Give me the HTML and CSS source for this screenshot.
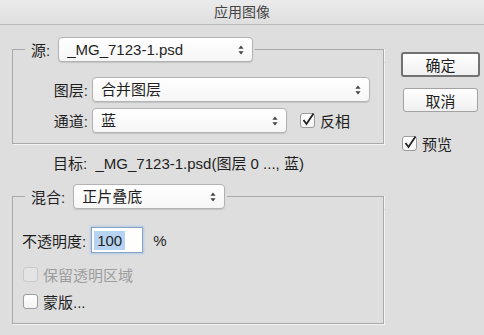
FILE: index.html
```html
<!DOCTYPE html>
<html lang="zh-CN">
<head>
    <meta charset="UTF-8">
    <title>应用图像</title>
    <link rel="stylesheet" href="styles.css">
</head>
<body>
    <div class="titlebar">应用图像</div>

    <div class="dialog">
        <div class="main">
            <!-- Source group -->
            <div class="group source">
                <div class="group-head">
                    <span class="label">源:</span>
                    <div class="select src-select">_MG_7123-1.psd<span class="arrows"><svg width="6" height="10" viewBox="0 0 6 10"><path d="M3 0.5 L5.6 3.8 H0.4 Z M3 9.5 L5.6 6.2 H0.4 Z" fill="#444"/></svg></span></div>
                </div>
                <div class="group-body">
                    <div class="row">
                        <span class="label fixed">图层:</span>
                        <div class="select layer-select">合并图层<span class="arrows"><svg width="6" height="10" viewBox="0 0 6 10"><path d="M3 0.5 L5.6 3.8 H0.4 Z M3 9.5 L5.6 6.2 H0.4 Z" fill="#444"/></svg></span></div>
                    </div>
                    <div class="row second">
                        <span class="label fixed">通道:</span>
                        <div class="select channel-select">蓝<span class="arrows"><svg width="6" height="10" viewBox="0 0 6 10"><path d="M3 0.5 L5.6 3.8 H0.4 Z M3 9.5 L5.6 6.2 H0.4 Z" fill="#444"/></svg></span></div>
                        <label class="check invert">
                            <span class="box"><svg width="16" height="16" viewBox="0 0 16 16"><polyline points="3.5,8 6.5,12 13.5,1.5" fill="none" stroke="#222" stroke-width="1.8"/></svg></span>
                            反相
                        </label>
                    </div>
                </div>
            </div>

            <p class="target">目标:&nbsp;&nbsp;_MG_7123-1.psd(图层 0 ..., 蓝)</p>

            <!-- Blending group -->
            <div class="group blend">
                <div class="group-head">
                    <span class="label">混合:</span>
                    <div class="select blend-select">正片叠底<span class="arrows"><svg width="6" height="10" viewBox="0 0 6 10"><path d="M3 0.5 L5.6 3.8 H0.4 Z M3 9.5 L5.6 6.2 H0.4 Z" fill="#444"/></svg></span></div>
                </div>
                <div class="group-body">
                    <div class="row opacity">
                        <span class="label">不透明度:</span>
                        <div class="input"><span class="selected">100</span></div>
                        <span class="unit">%</span>
                    </div>
                    <label class="check row-check disabled">
                        <span class="box"></span>
                        保留透明区域
                    </label>
                    <label class="check row-check last">
                        <span class="box"></span>
                        蒙版...
                    </label>
                </div>
            </div>
        </div>

        <!-- Buttons -->
        <div class="side">
            <button class="btn default">确定</button>
            <button class="btn">取消</button>
            <label class="check preview">
                <span class="box"><svg width="16" height="16" viewBox="0 0 16 16"><polyline points="3.5,8 6.5,12 13.5,1.5" fill="none" stroke="#222" stroke-width="1.8"/></svg></span>
                预览
            </label>
        </div>
    </div>
</body>
</html>
```

FILE: styles.css
```css
/* General */
body {
    margin: 0;
    width: 484px;
    height: 335px;
    overflow: hidden;
    background-color: #dedede;
    color: #1f1f1f;
    font-family: "Liberation Sans", "Noto Sans CJK SC", sans-serif;
    font-size: 15px;
}

.titlebar {
    height: 24px;
    line-height: 24px;
    text-align: center;
    font-size: 14px;
    color: #444;
    background: linear-gradient(#ebebeb, #dfdfdf);
    border-bottom: 1px solid #b9b9b9;
}

/* Layout */
.dialog {
    display: flex;
    padding: 12px 0 0 12px;
}

.main {
    width: 372px;
}

.side {
    width: 80px;
    margin-left: 16px;
    padding-top: 15px;
    display: flex;
    flex-direction: column;
    align-items: flex-start;
}

/* Groups: head line runs through the popup menu */
.group-head {
    display: flex;
    align-items: center;
    height: 25px;
}

.group-head::before,
.group-head::after {
    content: "";
    align-self: flex-end;
    height: 12px;
    border-top: 1px solid #a9a9a9;
}

.group-head::before {
    width: 12px;
    margin-right: 6px;
    border-left: 1px solid #a9a9a9;
}

.group-head::after {
    flex: 1;
    margin-left: 2px;
    border-right: 1px solid #a9a9a9;
    box-shadow: 1px 0 0 #f3f3f3;
}

.group-head .label {
    margin-right: 8px;
}

.group-body {
    padding: 15px 0 10px;
    border: 1px solid #a9a9a9;
    border-top: none;
    box-shadow: 1px 1px 0 #f3f3f3;
}

.label {
    white-space: nowrap;
}

.row {
    display: flex;
    align-items: center;
    height: 25px;
}

.row.second {
    margin-top: 6px;
}

.label.fixed {
    width: 75px;
    text-align: right;
    margin-right: 4px;
}

/* Popup menus */
.select {
    position: relative;
    box-sizing: border-box;
    height: 25px;
    line-height: 23px;
    padding-left: 8px;
    background: linear-gradient(#ffffff, #f6f6f6);
    border: 1px solid #b3b3b3;
    border-radius: 4px;
    box-shadow: 0 1px 1px rgba(0,0,0,0.12);
    white-space: nowrap;
}

.select .arrows {
    position: absolute;
    right: 8px;
    top: 7px;
    width: 6px;
    height: 10px;
    display: flex;
}

.src-select { width: 195px; }
.layer-select { width: 278px; }
.channel-select { width: 195px; }
.blend-select { width: 152px; }

/* Checkboxes */
.check {
    display: flex;
    align-items: center;
    white-space: nowrap;
}

.check .box {
    box-sizing: border-box;
    width: 15px;
    height: 15px;
    margin-right: 5px;
    background: linear-gradient(#ffffff, #f3f3f3);
    border: 1px solid #9c9c9c;
    border-radius: 3px;
    display: flex;
}

.check .box svg {
    margin: -2px 0 0 -1px;
    flex: none;
}

.check.invert {
    margin-left: 13px;
}

.check.disabled {
    color: #9d9d9d;
}

.check.disabled .box {
    background: #e4e4e4;
    border-color: #c9c9c9;
}

/* Target line */
.target {
    margin: 10px 0;
    padding-left: 41px;
    line-height: 20px;
}

/* Blend group */
.blend .group-body {
    padding: 18px 0 12px;
}

.row.opacity {
    height: 26px;
    padding-left: 9px;
}

.input {
    box-sizing: border-box;
    width: 52px;
    height: 26px;
    margin-left: 5px;
    padding: 3px 0 0 2px;
    background-color: #fff;
    border: 1px solid #86a3c6;
    box-shadow: 0 0 2px 1px #b2cbe8;
}

.input .selected {
    display: inline-block;
    height: 19px;
    line-height: 19px;
    padding: 0 3px;
    background-color: #b6d3f1;
}

.unit {
    margin-left: 10px;
}

.row-check {
    height: 20px;
    padding-left: 10px;
    margin-top: 11px;
}

.row-check.last {
    margin-top: 7px;
}

/* Buttons */
.btn {
    box-sizing: border-box;
    width: 75px;
    height: 24px;
    margin-left: 3px;
    padding: 0;
    font-family: inherit;
    font-size: 15px;
    color: #1f1f1f;
    background: linear-gradient(#ffffff, #f0f0f0);
    border: 1px solid #a2a2a2;
    border-radius: 3px;
}

.btn.default {
    width: 79px;
    height: 25px;
    margin-left: 1px;
    border: 2px solid #727272;
}

.btn + .btn {
    margin-top: 11px;
}

.check.preview {
    margin-top: 21px;
    margin-left: 2px;
}
```
